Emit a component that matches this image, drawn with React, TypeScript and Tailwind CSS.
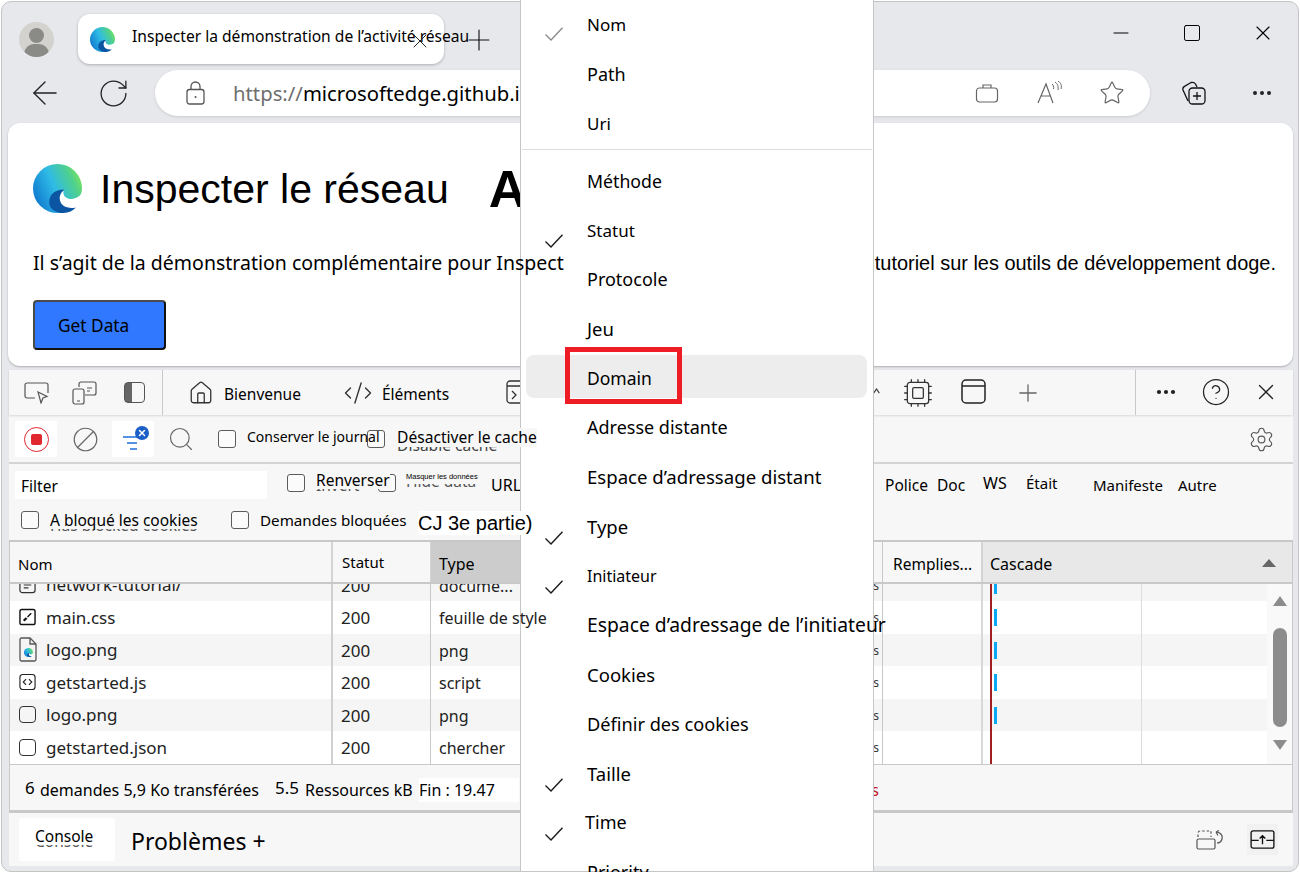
import type { ReactNode } from 'react'
import { RotateCw, ArrowLeft, Star, Ellipsis, X, Plus, Minus, Square, Search, Ban, Settings, House, CodeXml, CircleHelp, Cpu } from 'lucide-react'

function EdgeLogo({ id, className }: { id: string; className: string }) {
  return (
    <svg viewBox="0 0 48 48" className={`shrink-0 ${className}`}>
      <defs>
        <linearGradient id={id} x1="0" y1="0.7" x2="1" y2="0.25">
          <stop offset="0" stopColor="#0f78cf" />
          <stop offset="0.45" stopColor="#2fbbe6" />
          <stop offset="0.8" stopColor="#4fd08f" />
          <stop offset="1" stopColor="#7be35a" />
        </linearGradient>
      </defs>
      <circle cx="24" cy="24" r="24" fill={`url(#${id})`} />
      <path d="M48 27C47 32 41 35 35 34C31 33 29 30 30 26C23 26 19 32 21 38C23 44 30 48 38 48L48 48Z" fill="#fff" />
      <path d="M30 25C21 25 15 31 16 39C17 45 24 48.500 30 48C35 47.500 39 46 42 42.500C36 44 30 42.500 27.500 38.500C25 34 26 29 30 26Z" fill="#0b55a3" />
    </svg>
  )
}

function Check({ gray }: { gray?: boolean }) {
  return (
    <svg viewBox="0 0 18 14" className={`w-[18px] h-[14px] ${gray ? 'translate-y-[9px]' : 'translate-y-[11px]'}`} fill="none" stroke={gray ? '#8a8a8a' : '#1a1a1a'} strokeWidth="1.400">
      <path d="M0.500 7.500L6 13L17.500 0.800" />
    </svg>
  )
}

function Box() {
  return <span className="block w-[18px] h-[18px] shrink-0 rounded-[3px] border border-[#5c5c5c] bg-[#fbfbfb]" />
}

// traduction posée par-dessus le libellé d'origine, qui dépasse encore en dessous
function Overlaid({ ghost, ghostClass, className, children }: { ghost: string; ghostClass: string; className: string; children: ReactNode }) {
  return (
    <span className="relative block whitespace-nowrap">
      <span className={`absolute left-0 ${ghostClass}`}>{ghost}</span>
      <span className={`relative block ${className}`}>{children}</span>
    </span>
  )
}

const menuItems = [
  { label: 'Nom', check: 'gray', cls: 'text-[17px]' },
  { label: 'Path', cls: 'text-[18px]' },
  { label: 'Uri', cls: 'text-[17px]' },
  { sep: true },
  { label: 'Méthode', cls: 'text-[17.700px]' },
  { label: 'Statut', check: 'on', cls: 'text-[17px]' },
  { label: 'Protocole', cls: 'text-[18px]' },
  { label: 'Jeu', cls: 'text-[18.500px]' },
  { label: 'Domain', hover: true, cls: 'text-[17.500px]' },
  { label: 'Adresse distante', cls: 'text-[18px]' },
  { label: 'Espace d’adressage distant', cls: 'text-[18.600px]' },
  { label: 'Type', check: 'on', cls: 'text-[18.500px]' },
  { label: 'Initiateur', check: 'on', cls: 'text-[16px]' },
  { label: 'Espace d’adressage de l’initiateur', cls: 'text-[19.300px]' },
  { label: 'Cookies', cls: 'text-[18.500px]' },
  { label: 'Définir des cookies', cls: 'text-[18.200px]' },
  { label: 'Taille', check: 'on', cls: 'text-[18.500px]' },
  { label: 'Time', check: 'on', cls: 'text-[18px] -ml-[2px]' },
  { label: 'Priority', cls: 'text-[18px]' },
]

function FileIcon({ kind }: { kind: string }) {
  if (kind === 'doc')
    return (
      <svg viewBox="0 0 18 18" className="w-[18px] h-[18px]" fill="none" stroke="#333" strokeWidth="1.300">
        <rect x="1" y="1" width="16" height="16" rx="2.500" />
        <path d="M5 6H13M5 9H13M5 12H10" />
      </svg>
    )
  if (kind === 'css')
    return (
      <svg viewBox="0 0 18 18" className="w-[18px] h-[18px]" fill="none" stroke="#111" strokeWidth="1.500">
        <rect x="1" y="1" width="16" height="16" rx="2" />
        <path d="M5 13L8 10" strokeWidth="2.400" />
        <path d="M9 9L13 5" />
      </svg>
    )
  if (kind === 'img')
    return (
      <span className="relative block w-[18px] h-[25px]">
        <svg viewBox="0 0 18 25" className="w-[18px] h-[25px]" fill="none" stroke="#555" strokeWidth="1.300">
          <path d="M2.500 1H11L17 7V22.500A1.500 1.500 0 0 1 15.500 24H2.500A1.500 1.500 0 0 1 1 22.500V2.500A1.500 1.500 0 0 1 2.500 1Z" fill="#f4f4f4" />
          <path d="M11 1V7H17" />
        </svg>
        <EdgeLogo id="edge-file" className="absolute left-[5px] top-[11px] w-[9px] h-[9px]" />
      </span>
    )
  if (kind === 'js')
    return (
      <svg viewBox="0 0 18 18" className="w-[18px] h-[18px]" fill="none" stroke="#222" strokeWidth="1.200">
        <rect x="1" y="1" width="16" height="16" rx="3" />
        <path d="M7.500 6L4.500 9L7.500 12M10.500 6L13.500 9L10.500 12" />
      </svg>
    )
  return <span className="block w-[17px] h-[17px] rounded-[4px] border-[1.5px] border-[#333]" />
}

const rows = [
  { icon: 'doc', name: 'network-tutorial/', type: 'docume...', bar: true },
  { icon: 'css', name: 'main.css', type: 'feuille de style', bar: true },
  { icon: 'img', name: 'logo.png', type: 'png', bar: true },
  { icon: 'js', name: 'getstarted.js', type: 'script', bar: true },
  { icon: 'blank', name: 'logo.png', type: 'png', bar: true },
  { icon: 'blank', name: 'getstarted.json', type: 'chercher', bar: false },
]

export default function App() {
  return (
    <div className="relative w-[1300px] h-[872px] overflow-hidden bg-white font-['Noto_Sans',sans-serif] text-black">
      <div className="ml-[1px] mt-[1px] w-[1298px] h-[871px] border border-[#c4c4c4] rounded-[10px] bg-[#e6e8ec] overflow-hidden">
        {/* Onglets */}
        <div className="flex items-start h-[68px]">
          <div className="ml-[17px] mt-[20px] w-[35px] h-[35px] rounded-full bg-[#d3d2cf] relative overflow-hidden">
            <span className="absolute left-[10px] top-[6px] w-[15px] h-[15px] rounded-full bg-[#8a8a86]" />
            <span className="absolute left-[5px] top-[22px] w-[25px] h-[20px] rounded-full bg-[#8a8a86]" />
          </div>
          <div className="ml-[24px] mt-[12px] w-[366px] h-[50px] rounded-[12px] bg-white shadow-[0_1px_3px_rgba(0,0,0,0.25)] flex items-center pl-[12px] relative">
            <EdgeLogo id="edge-tab" className="w-[25px] h-[25px]" />
            <span className="ml-[17px] text-[15.600px] whitespace-nowrap -translate-y-[2px]">Inspecter la démonstration de l’activité réseau</span>
            <X className="absolute left-[330px] top-[15px] w-[24px] h-[24px] text-[#222]" strokeWidth={1} />
          </div>
          <Plus className="ml-[18px] mt-[21px] w-[34px] h-[34px] relative text-[#111]" strokeWidth={0.800} />
          <div className="ml-auto flex items-center mt-[19px] mr-[23px] gap-[49px]">
            <Minus className="w-[24px] h-[24px]" strokeWidth={1.100} />
            <Square className="w-[20px] h-[20px]" strokeWidth={1.200} />
            <X className="w-[24px] h-[24px]" strokeWidth={1.100} />
          </div>
        </div>

        {/* Barre d'adresse */}
        <div className="flex items-center h-[46px]">
          <ArrowLeft className="ml-[24px] w-[38px] h-[38px] text-[#222]" strokeWidth={0.850} />
          <RotateCw className="ml-[33px] w-[33px] h-[33px] text-[#222]" strokeWidth={0.950} />
          <div className="ml-[25px] w-[995px] h-[46px] rounded-full bg-white shadow-[0_1px_3px_rgba(0,0,0,0.12)] flex items-center">
            <svg viewBox="0 0 19 24" className="ml-[31px] w-[19px] h-[24px]" fill="none" stroke="#555" strokeWidth="1.300">
              <rect x="1" y="8.500" width="17" height="14.500" rx="2.500" />
              <path d="M5 8.500V5.500A4.500 4.500 0 0 1 14 5.500V8.500" />
              <circle cx="9.500" cy="16" r="1" fill="#555" stroke="none" />
            </svg>
            <span className="ml-[28px] text-[20.300px] whitespace-nowrap"><span className="text-[#6f6f6f]">https://</span>microsoftedge.github.io</span>
            <svg viewBox="0 0 24 20" className="ml-auto w-[24px] h-[20px]" fill="none" stroke="#666" strokeWidth="1.200">
              <rect x="1.500" y="5" width="21" height="14" rx="3" />
              <path d="M8 5V2H16V5" />
            </svg>
            <svg viewBox="0 0 26 24" className="ml-[38px] w-[26px] h-[24px]" fill="none" stroke="#666" strokeWidth="1.200">
              <path d="M1 22L9 3L16 22M4 15H14" />
              <path d="M15 3C16.500 4 17 6 16.500 8M18 1C21 3 21.500 6 21 9M21 0C24 2 25 5 24 8" strokeWidth="1" />
            </svg>
            <Star className="ml-[36px] mr-[25px] w-[26px] h-[26px] text-[#666]" strokeWidth={1.100} />
          </div>
          <svg viewBox="0 0 27 26" className="ml-[30px] w-[27px] h-[26px]" fill="none" stroke="#111" strokeWidth="1.300">
            <path d="M8 21L3 10C2.500 8 3 7 4.500 6.300L11 2.500C13 2 14.500 2.500 15.500 4L17 7" />
            <rect x="9" y="8" width="16" height="16" rx="3.500" fill="#e6e8ec" />
            <path d="M17 12V20M13 16H21" />
          </svg>
          <Ellipsis className="ml-[43px] w-[24px] h-[24px] text-[#222]" strokeWidth={2} />
        </div>

        {/* Page */}
        <div className="ml-[6px] mt-[7px] w-[1285px] h-[243px] rounded-[12px] bg-white shadow-[0_1px_2px_rgba(0,0,0,0.25)] font-['Liberation_Sans',sans-serif]">
          <div className="flex items-center pt-[41px] pl-[25px] -mb-[1px]">
            <EdgeLogo id="edge-page" className="w-[49px] h-[49px] -translate-y-[1px]" />
            <h1 className="ml-[18px] text-[41px] leading-[50px] whitespace-nowrap">Inspecter le réseau</h1>
            <span className="ml-[40px] text-[52px] leading-[50px] font-bold">A</span>
          </div>
          <p className="mt-[36px] pl-[25px] pr-[17px] flex justify-between leading-[28px] whitespace-nowrap">
            <span className="relative z-20 text-[19.500px] font-['Noto_Sans',sans-serif]">Il s’agit de la démonstration complémentaire pour Inspect</span>
            <span className="relative z-20 text-[19.950px]">tutoriel sur les outils de développement doge.</span>
          </p>
          <button className="block ml-[25px] mt-[23px] w-[133px] h-[50px] rounded-[4px] bg-[#2f78ff] border-2 border-[#4a4a4a] border-r-[#111] border-b-[#111] text-left pl-[23px] pt-[2px] text-[17.300px] font-['Noto_Sans',sans-serif]">
            Get Data
          </button>
        </div>

        {/* DevTools */}
        <div className="ml-[7px] mt-[4px] w-[1284px] h-[496px] bg-[#f7f7f7] flex flex-col text-[15px]">
          <div className="h-[45px] shrink-0 flex items-center shadow-[0_1px_2px_rgba(0,0,0,0.12)] relative">
            <svg viewBox="0 0 25 22" className="ml-[15px] w-[25px] h-[22px]" fill="none" stroke="#555" strokeWidth="1.200">
              <path d="M11 16H3A2 2 0 0 1 1 14V3A2 2 0 0 1 3 1H22A2 2 0 0 1 24 3V11" />
              <path d="M14 10L23 14.500L19 16L17 21Z" />
            </svg>
            <svg viewBox="0 0 25 24" className="ml-[23px] w-[25px] h-[24px]" fill="none" stroke="#555" strokeWidth="1.200">
              <path d="M7 6V3A2 2 0 0 1 9 1H22A2 2 0 0 1 24 3V12A2 2 0 0 1 22 14H13" />
              <rect x="1" y="8" width="11" height="15" rx="2" />
              <path d="M5 20H8M15 7H20M15 10H18" />
            </svg>
            <span className="ml-[27px] w-[21px] h-[21px] rounded-[4px] border-[1.5px] border-[#555] bg-[linear-gradient(to_right,#666_0,#666_35%,#f7f7f7_35%)]" />
            <span className="ml-[17px] w-px h-[45px] bg-[#c8c8c8]" />
            <House className="ml-[25px] w-[26px] h-[26px] text-[#333]" strokeWidth={1.200} />
            <span className="ml-[10px] text-[15.500px] translate-y-[2px]">Bienvenue</span>
            <CodeXml className="ml-[42px] w-[30px] h-[30px] text-[#333]" strokeWidth={1.100} />
            <span className="ml-[9px] text-[15.500px] translate-y-[2px]">Éléments</span>
            <svg viewBox="0 0 22 24" className="absolute left-[497px] top-[10px] w-[22px] h-[24px]" fill="none" stroke="#333" strokeWidth="1.300">
              <rect x="1" y="1" width="20" height="22" rx="3" />
              <path d="M1 6H21M6 11L10 15L6 19" />
            </svg>
            <svg viewBox="0 0 10 8" className="absolute left-[864px] top-[18px] w-[7px] h-[6px]" fill="none" stroke="#333" strokeWidth="1.500">
              <path d="M1 7L5 1L9 7" />
            </svg>
            <Cpu className="absolute left-[893px] top-[7px] w-[32px] h-[32px] text-[#333]" strokeWidth={0.950} />
            <svg viewBox="0 0 25 25" className="absolute left-[952px] top-[9px] w-[25px] h-[25px]" fill="none" stroke="#222" strokeWidth="1.500">
              <rect x="1" y="1" width="23" height="23" rx="4" />
              <path d="M1 7H24" />
            </svg>
            <Plus className="absolute left-[1005px] top-[9px] w-[28px] h-[28px] text-[#666]" strokeWidth={1.100} />
            <span className="absolute left-[1126px] top-0 w-px h-[45px] bg-[#c8c8c8]" />
            <Ellipsis className="absolute left-[1145px] top-[10px] w-[24px] h-[24px] text-[#222]" strokeWidth={2.200} />
            <CircleHelp className="absolute left-[1192px] top-[7px] w-[30px] h-[30px] text-[#222]" strokeWidth={1} />
            <X className="absolute left-[1244px] top-[9px] w-[26px] h-[26px] text-[#222]" strokeWidth={1.200} />
          </div>

          {/* Enregistrement */}
          <div className="h-[48px] shrink-0 flex items-center border-b-2 border-[#d4d4d4] mt-[1px]">
            <span className="ml-[6px] w-[42px] h-[36px] bg-white rounded-[2px] flex items-center justify-center">
              <span className="w-[25px] h-[25px] rounded-full border-[1.5px] border-[#e0282e] flex items-center justify-center">
                <span className="w-[11px] h-[11px] rounded-[2px] bg-[#e0282e]" />
              </span>
            </span>
            <Ban className="ml-[15px] w-[27px] h-[27px] text-[#666] -scale-x-100" strokeWidth={1.100} />
            <span className="ml-[13px] w-[42px] h-[36px] bg-white rounded-[2px] relative">
              <svg viewBox="0 0 18 14" className="absolute left-[11px] top-[15px] w-[18px] h-[14px]" fill="none" stroke="#1e6fd9" strokeWidth="1.300">
                <path d="M0 1H17M4 7H14M7 13H14" />
              </svg>
              <span className="absolute left-[23px] top-[5px] w-[14px] h-[14px] rounded-full bg-[#1a5fc8] text-white flex items-center justify-center">
                <X className="w-[10px] h-[10px]" strokeWidth={3.500} />
              </span>
            </span>
            <Search className="ml-[13px] w-[28px] h-[28px] text-[#666]" strokeWidth={1} />
            <span className="ml-[23px]"><Box /></span>
            <span className="ml-[11px] w-[120px] whitespace-nowrap text-[14px] -translate-y-[3px]">Conserver le journal</span>
            <Box />
            <span className="relative z-20 ml-[12px] text-[15.600px]">
              <Overlaid ghost="Disable cache" ghostClass="top-[4px] text-[#444]" className="bg-[#f7f7f7] leading-[19px] -translate-y-[2px]">Désactiver le cache</Overlaid>
            </span>
            <Settings className="ml-auto mr-[18px] w-[27px] h-[27px] text-[#555]" strokeWidth={1} />
          </div>

          {/* Filtres */}
          <div className="h-[45px] shrink-0 flex items-center pb-[3px]">
            <span className="ml-[6px] w-[252px] h-[28px] bg-white pl-[6px] text-[15.500px] leading-[31px]">Filter</span>
            <span className="ml-[20px] -translate-y-[2px]"><Box /></span>
            <span className="relative z-[1] ml-[11px] w-[62px] text-[15.500px] -translate-y-[5px]">
              <Overlaid ghost="Invert" ghostClass="top-[2px] text-[#555]" className="bg-[#f7f7f7] leading-[17px] w-fit">Renverser</Overlaid>
            </span>
            <span className="-translate-y-[2px]"><Box /></span>
            <span className="ml-[10px] w-[85px] text-[15.500px] -translate-y-[8px]">
              <Overlaid ghost="Hide data" ghostClass="top-0 text-[#555]" className="bg-[#f7f7f7] font-['Liberation_Sans',sans-serif] text-[7.500px] leading-[14px] w-[76px]">Masquer les données</Overlaid>
            </span>
            <span className="w-[394px] text-[16px]">URL</span>
            <span className="w-[52px] text-[15.500px] translate-y-[1px]">Police</span>
            <span className="w-[46px] text-[15.500px] translate-y-[1px]">Doc</span>
            <span className="w-[43px] text-[16px] -translate-y-[2px]">WS</span>
            <span className="w-[67px] text-[15px] -translate-y-[2px]">Était</span>
            <span className="w-[85px] text-[15px]">Manifeste</span>
            <span className="text-[15px]">Autre</span>
          </div>

          <div className="h-[31px] shrink-0 flex items-start pt-[2px]">
            <span className="ml-[12px]"><Box /></span>
            <span className="ml-[11px] w-[181px] text-[15.500px] translate-y-[1px]">
              <Overlaid ghost="Has blocked cookies" ghostClass="top-[2px] text-[#555]" className="bg-[#f7f7f7] leading-[17px] w-fit pr-[16px]">A bloqué les cookies</Overlaid>
            </span>
            <Box />
            <span className="ml-[11px] w-[158px] text-[15.200px] leading-[18px] whitespace-nowrap">Demandes bloquées</span>
            <span className="relative z-20 bg-white font-['Liberation_Sans',sans-serif] text-[20px] leading-[24px] whitespace-nowrap">CJ 3e partie)</span>
          </div>

          {/* Table */}
          <div className="h-[225px] shrink-0 border-t-2 border-x border-b border-[#c8c8c8] flex flex-col">
            <div className="h-[42px] shrink-0 flex border-b-2 border-[#c8c8c8] text-[15px]">
              <span className="w-[323px] pl-[8px] leading-[45px] border-r-2 border-[#d4d4d4]">Nom</span>
              <span className="w-[98px] pl-[9px] leading-[41px] border-r border-[#d4d4d4]">Statut</span>
              <span className="w-[90px] pl-[8px] text-[16px] leading-[45px] bg-[#cccccc]">Type</span>
              <span className="w-[362px] border-r border-[#c8c8c8]" />
              <span className="w-[100px] pl-[10px] text-[15.500px] leading-[45px] whitespace-nowrap border-r-2 border-[#d4d4d4]">Remplies...</span>
              <span className="flex-1 pl-[7px] text-[16px] leading-[44px] bg-[#e8e8e8] relative">
                Cascade
                <span className="absolute right-[16px] top-[17px] w-0 h-0 border-x-[7px] border-x-transparent border-b-[8px] border-b-[#666]" />
              </span>
            </div>
            <div className="flex-1 flex overflow-hidden">
              <div className="flex-1 overflow-hidden">
                <div className="-mt-[15.500px]">
                  {rows.map((r, i) => (
                    <div key={i} className={`flex h-[32.500px] text-[17px] leading-[33px] ${i % 2 === 0 ? 'bg-[#f5f5f5]' : 'bg-white'}`}>
                      <span className="w-[323px] pl-[9px] flex items-center gap-[10px] border-r-2 border-[#d0d0d0] whitespace-nowrap">
                        <span className="w-[17px] flex justify-center shrink-0"><FileIcon kind={r.icon} /></span>
                        <span className="text-[#222]">{r.name}</span>
                      </span>
                      <span className="w-[98px] pl-[8px] border-r border-[#c8c8c8] text-[#222]">200</span>
                      <span className="relative z-20 w-[100px] pl-[8px] text-[16px] leading-[35px] whitespace-nowrap text-[#222]">{r.type}</span>
                      <span className="w-[352px] pr-[3px] border-r border-[#c8c8c8] text-right text-[12px] text-[#333]">s</span>
                      <span className="w-[100px] border-r-2 border-[#d8d8d8]" />
                      <span className="flex-1 flex">
                        <span className="relative w-[159px] border-r border-[#dcdcdc]">
                          <span className="absolute left-[7px] top-0 bottom-0 w-[1.5px] bg-[#a02020]" />
                          {r.bar && <span className="absolute left-[11px] top-[8px] w-[3px] h-[17px] bg-[#0aa9f5]" />}
                        </span>
                        <span className="flex-1" />
                      </span>
                    </div>
                  ))}
                </div>
              </div>
              <div className="w-[25px] shrink-0 bg-[#f9f9f9] flex flex-col items-center relative">
                <span className="mt-[12px] w-0 h-0 border-x-[7px] border-x-transparent border-b-[10px] border-b-[#8c8c8c]" />
                <span className="mt-[22px] w-[14px] h-[99px] rounded-full bg-[#8c8c8c]" />
                <span className="mt-[13px] w-0 h-0 border-x-[7px] border-x-transparent border-t-[10px] border-t-[#8c8c8c]" />
              </div>
            </div>
          </div>

          {/* Statut */}
          <div className="h-[48px] shrink-0 flex items-center border-x border-b-[3px] border-[#c8c8c8] text-[16px] pt-[5px] whitespace-nowrap">
            <span className="ml-[15px] w-[15px] text-[17px] -translate-y-[2px]">6</span>
            <span className="w-[235px]">demandes 5,9 Ko transférées</span>
            <span className="w-[30px] text-[17px] -translate-y-[2px]">5.5</span>
            <span className="w-[114px]">Ressources kB</span>
            <span className="bg-white w-[100px] leading-[24px]">Fin : 19.47</span>
            <span className="ml-auto mr-[413px] text-[#c4141c]">s</span>
          </div>

          {/* Tiroir */}
          <div className="flex-1 flex items-center">
            <span className="ml-[10px] w-[96px] h-[43px] bg-white rounded-[2px] pl-[16px] pt-[10px] text-[15.500px]">
              <Overlaid ghost="Console" ghostClass="top-[2px] text-[#555]" className="w-fit bg-white leading-[17px] pr-[4px]">Console</Overlaid>
            </span>
            <span className="ml-[16px] text-[23px] whitespace-nowrap translate-y-[2px]">Problèmes +</span>
            <svg viewBox="0 0 28 20" className="ml-auto w-[28px] h-[20px]" fill="none" stroke="#555" strokeWidth="1.200">
              <path d="M2 7V3A2 2 0 0 1 4 1H15V7" strokeDasharray="2.500 2" />
              <rect x="1" y="9" width="18" height="10" rx="1.500" />
              <path d="M20 2L23 0.500M20 2L22 5.500M20 2C24 2 27 5 26 9C25.500 11 24 13 21 13" />
            </svg>
            <span className="ml-[23px] mr-[15px] w-[31px] h-[31px] bg-[#f1f1f1] flex items-center justify-center">
              <svg viewBox="0 0 26 20" className="w-[25px] h-[19px]" fill="none" stroke="#111" strokeWidth="1.400">
                <rect x="1" y="1" width="24" height="18" rx="2" />
                <path d="M1 11H9M17 11H25M13 15V6M10 9L13 6L16 9" />
              </svg>
            </span>
          </div>
        </div>
      </div>

      {/* Menu contextuel */}
      <div className="absolute left-[520px] top-0 w-[354px] h-[872px] z-10 bg-white border-x border-b border-[#c6c6c6]">
        {menuItems.map((item, i) =>
          item.sep ? (
            <div key={i} className="h-px mx-[1px] mt-[1px] mb-[6px] bg-[#dcdcdc]" />
          ) : (
            <div key={i} className={`h-[49.400px] flex items-center whitespace-nowrap ${item.hover ? 'relative' : ''}`}>
              {item.hover && <span className="absolute left-[5px] right-[6px] top-[1px] h-[43px] rounded-[8px] bg-[#ededed]" />}
              <span className="relative w-[66px] shrink-0 pl-[24px]">
                {item.check && <Check gray={item.check === 'gray'} />}
              </span>
              <span className={`relative ${item.cls}`}>{item.label}</span>
            </div>
          ),
        )}
      </div>

      {/* Cadre d'annotation */}
      <div className="absolute left-[565px] top-[347px] w-[117px] h-[57px] z-20 border-[5px] border-[#ee1c25]" />
    </div>
  )
}
